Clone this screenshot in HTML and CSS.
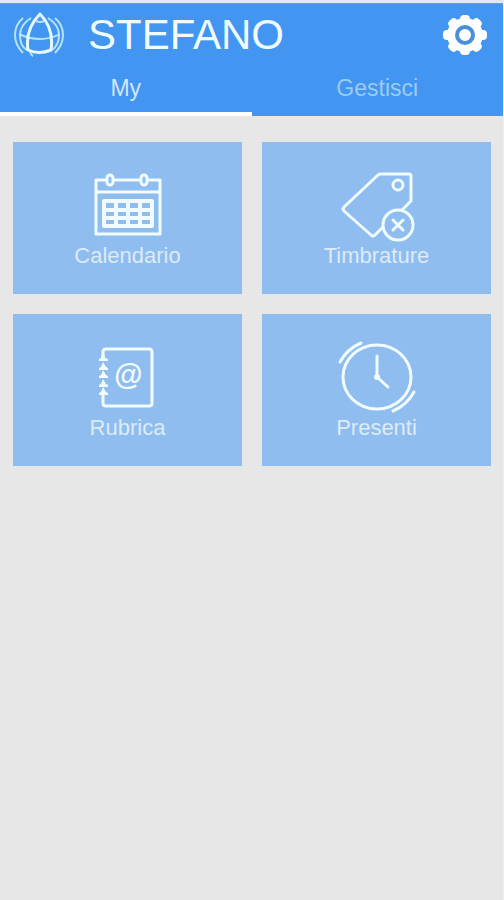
FILE: index.html
```html
<!DOCTYPE html>
<html lang="it">
<head>
    <meta charset="UTF-8">
    <meta name="viewport" content="width=device-width, initial-scale=1.0">
    <title>Stefano</title>
    <link rel="stylesheet" href="styles.css">
</head>
<body>
    <header class="header">
        <div class="title-bar">
            <svg class="logo" viewBox="0 0 50 46" aria-hidden="true">
                <g class="logo-thin">
                    <path d="M9 6C3 11 1 17 1 23C1 30 4 36 9 41"/>
                    <path d="M41 6C47 11 49 17 49 23C49 30 46 36 41 41"/>
                    <path d="M17 6C9 11 6 17 6 23C6 31 9 36 13 38"/>
                    <path d="M34 6C42 11 45 17 45 23C45 31 41 36 38 38"/>
                    <path d="M5 22Q15 27 26 27T46 22"/>
                    <path d="M16 40Q17 43 19 44"/>
                </g>
                <path d="M26 2C16 12 12 25 14 38Q25 43 37 38C39 25 36 12 26 2Z"/>
                <path class="logo-thin" d="M22 9Q26 11 30 9"/>
            </svg>
            <h1>STEFANO</h1>
            <button class="settings" type="button" aria-label="Impostazioni">
                <svg viewBox="0 0 44 42" aria-hidden="true">
                    <g class="gear" transform="translate(22 21)">
                        <ellipse rx="18" ry="17"/>
                        <rect x="-5" y="-20" width="10" height="40" rx="4"/>
                        <rect x="-22" y="-5" width="44" height="10" rx="4"/>
                        <rect x="-21" y="-5" width="42" height="10" rx="4" transform="rotate(45)"/>
                        <rect x="-21" y="-5" width="42" height="10" rx="4" transform="rotate(-45)"/>
                        <circle class="gear-ring" r="8"/>
                    </g>
                </svg>
            </button>
        </div>
        <nav class="tabs">
            <a class="tab active" href="#my">My</a>
            <a class="tab" href="#gestisci">Gestisci</a>
        </nav>
    </header>

    <main class="tiles">
        <a class="tile" href="#calendario">
            <svg class="icon" viewBox="0 0 84 74" aria-hidden="true">
                <path d="M19 11H10V65H74V11H63M29 11H53M10 23H74"/>
                <rect x="21" y="6" width="6" height="10" rx="3"/>
                <rect x="55" y="6" width="6" height="10" rx="3"/>
                <path class="thick" d="M18 32H66V57H18ZM30 32V57M42 32V57M54 32V57M18 41H66M18 49H66"/>
            </svg>
            <span>Calendario</span>
        </a>
        <a class="tile" href="#timbrature">
            <svg class="icon" viewBox="0 0 84 74" aria-hidden="true">
                <path d="M48 58L40 66Q38 68 36 66L9 42Q7 40 9 38L43 6Q44 5 46 5H74Q76 5 76 7V32L67 41"/>
                <circle cx="63" cy="16" r="5"/>
                <circle cx="63" cy="56" r="15"/>
                <path d="M58 51L68 61M68 51L58 61"/>
            </svg>
            <span>Timbrature</span>
        </a>
        <a class="tile" href="#rubrica">
            <svg class="icon" viewBox="0 0 84 74" aria-hidden="true">
                <path d="M17 18V11Q17 8 20 8H63Q66 8 66 11V62Q66 65 63 65H20Q17 65 17 62V54"/>
                <path class="spine" d="M16 12H18L19 17L22 18V20H13V18L15 17ZM17 21L20 26L22 27V29H13V27L15 26ZM17 29L20 34L22 35V37H13V35L15 34ZM17 38L20 43L22 44V46H13V44L15 43ZM17 46L20 51L22 52V54H13V52L15 51Z"/>
                <text x="42" y="44">@</text>
            </svg>
            <span>Rubrica</span>
        </a>
        <a class="tile" href="#presenti">
            <svg class="icon" viewBox="0 0 84 74" aria-hidden="true">
                <ellipse cx="42" cy="36" rx="34" ry="32"/>
                <path d="M42 15V36L53 46"/>
                <path d="M5 21Q12 8 26 2M79 51Q72 64 58 70"/>
                <circle class="pin" cx="42" cy="36" r="3"/>
            </svg>
            <span>Presenti</span>
        </a>
    </main>
</body>
</html>
```

FILE: styles.css
```css
* {
    box-sizing: border-box;
}

body {
    margin: 0;
    min-height: 100vh;
    background-color: #e7e7e7;
    border-top: 3px solid #e2e8ee;
    border-right: 1px solid #eeeeee;
    font-family: "Liberation Sans", Arial, sans-serif;
}

a {
    text-decoration: none;
}

.header {
    background-color: #4295f0;
    border-top: 1px solid #6a9dd4;
}

.title-bar {
    display: flex;
    align-items: center;
    height: 62px;
    padding: 0 16px 0 14px;
    gap: 24px;
}

.logo {
    width: 50px;
    height: 46px;
    fill: none;
    stroke: #e4faff;
    stroke-width: 3;
    stroke-linejoin: round;
}

.logo-thin {
    stroke: #b5e3fc;
    stroke-width: 2;
}

h1 {
    flex-grow: 1;
    margin: 0;
    font-size: 42px;
    font-weight: normal;
    line-height: 48px;
    color: #f0fcff;
}

.settings {
    padding: 0;
    border: none;
    background: none;
    cursor: pointer;
}

.settings svg {
    display: block;
    width: 44px;
    height: 42px;
}

.gear {
    fill: #ffffff;
}

.gear-ring {
    stroke: #4790da;
    stroke-width: 4;
}

.tabs {
    display: flex;
}

.tab {
    flex: 1;
    height: 50px;
    border-bottom: 4px solid transparent;
    font-size: 23px;
    line-height: 44px;
    text-align: center;
    color: #9ccbf5;
}

.tab.active {
    border-bottom-color: #ffffff;
    color: #d3e7fa;
}

.tiles {
    display: grid;
    grid-template-columns: 1fr 1fr;
    gap: 20px;
    padding: 26px 12px 26px 13px;
}

.tile {
    display: flex;
    flex-direction: column;
    align-items: center;
    height: 152px;
    padding-top: 27px;
    background-color: #8fbdef;
    color: #dcebfa;
    font-size: 22px;
    line-height: 26px;
}

.icon {
    width: 84px;
    height: 74px;
    fill: none;
    stroke: #f0fcff;
    stroke-width: 3;
    stroke-linecap: round;
    stroke-linejoin: round;
}

.icon .thick {
    stroke-width: 4;
}

.icon .spine,
.icon .pin {
    fill: #f0fcff;
    stroke: none;
}

.icon text {
    fill: #f0fcff;
    stroke: none;
    font-size: 29px;
    font-style: italic;
    font-weight: bold;
    text-anchor: middle;
}
```
